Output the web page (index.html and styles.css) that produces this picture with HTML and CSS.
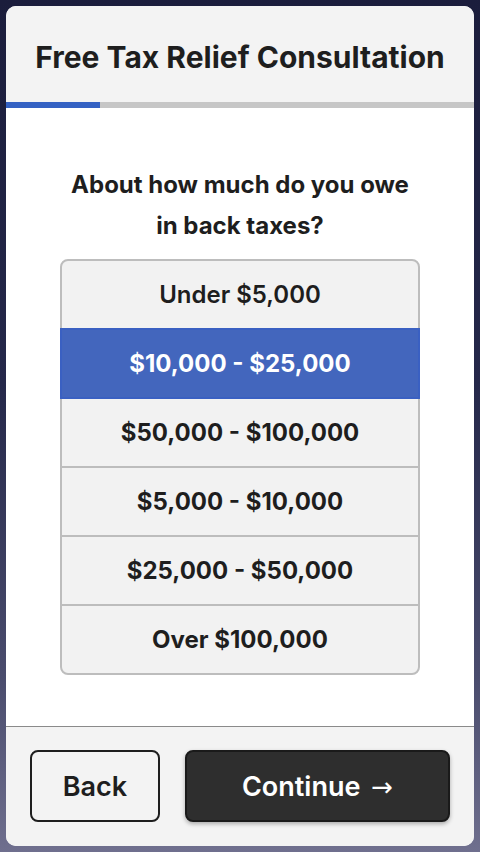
FILE: index.html
```html
<!DOCTYPE html>
<html lang="en">
<head>
    <meta charset="UTF-8">
    <meta name="viewport" content="width=device-width, initial-scale=1.0">
    <title>Free Tax Relief Consultation</title>
    <link rel="stylesheet" href="styles.css">
</head>
<body>
    <div class="card">
        <div class="header">
            <h1>Free Tax Relief Consultation</h1>
        </div>
        <div class="progress">
            <div class="progress-fill"></div>
        </div>
        <div class="isi">
            <h2 class="question">About how much do you owe<br>in back taxes?</h2>
            <div class="options">
                <div class="option first">Under $5,000</div>
                <div class="option selected">$10,000 - $25,000</div>
                <div class="option">$50,000 - $100,000</div>
                <div class="option">$5,000 - $10,000</div>
                <div class="option">$25,000 - $50,000</div>
                <div class="option last">Over $100,000</div>
            </div>
        </div>
        <div class="footer">
            <button class="btn-back">Back</button>
            <button class="btn-continue">Continue <span class="arrow">&rarr;</span></button>
        </div>
    </div>
</body>
</html>
```

FILE: styles.css
```css
* {
    margin: 0;
    padding: 0;
    box-sizing: border-box;
    font-family: Inter, "Noto Sans", Arial, sans-serif;
}
body {
    width: 480px;
    height: 852px;
    padding: 6px;
    background: linear-gradient(to bottom, #1b1d3c 0%, #25284a 45%, #4b4d6e 80%, #6f6f8e 100%);
    overflow: hidden;
}
.card {
    width: 468px;
    height: 840px;
    background-color: #fff;
    border-radius: 10px;
    overflow: hidden;
    display: flex;
    flex-direction: column;
}
.header {
    height: 96px;
    background-color: #f3f3f3;
    display: flex;
    align-items: center;
    justify-content: center;
    padding-top: 5px;
}
.header h1 {
    font-size: 30px;
    font-weight: 700;
    color: #1e1e1e;
}
.progress {
    height: 6px;
    background-color: #c6c6c6;
}
.progress-fill {
    width: 94px;
    height: 100%;
    background-color: #3461c3;
}
/* isi */
.isi {
    flex: 1;
    padding: 56px 54px 0;
}
.question {
    font-size: 24px;
    font-weight: 700;
    line-height: 41px;
    text-align: center;
    color: #1e1e1e;
    margin-bottom: 13px;
}
.options {
    display: flex;
    flex-direction: column;
}
.option {
    height: 71px;
    margin-top: -2px;
    border: 2px solid #bdbdbd;
    background-color: #f2f2f2;
    display: flex;
    align-items: center;
    justify-content: center;
    font-size: 24px;
    font-weight: 700;
    color: #1e1e1e;
    position: relative;
}
.option.first {
    margin-top: 0;
    border-radius: 8px 8px 0 0;
    font-weight: 600;
}
.option.last {
    border-radius: 0 0 8px 8px;
}
.option.selected {
    background-color: #4366bd;
    border-color: #3a60c2;
    color: #fff;
    z-index: 1;
}
/* footer */
.footer {
    height: 120px;
    background-color: #f3f3f3;
    border-top: 1px solid #8a8a8a;
    padding: 23px 24px 24px;
    display: flex;
    gap: 25px;
}
.footer button {
    height: 72px;
    border-radius: 8px;
    font-size: 27px;
    font-weight: 600;
    cursor: pointer;
}
.btn-back {
    width: 130px;
    background-color: transparent;
    border: 2px solid #1e1e1e;
    color: #1e1e1e;
}
.btn-continue {
    flex: 1;
    background-color: #2e2e2e;
    border: 2px solid #1a1a1a;
    color: #fff;
    box-shadow: 0 2px 4px rgba(0, 0, 0, .3);
}
.btn-continue .arrow {
    font-family: "DejaVu Sans", sans-serif;
    font-weight: 400;
    font-size: 26px;
    margin-left: 4px;
}
```
